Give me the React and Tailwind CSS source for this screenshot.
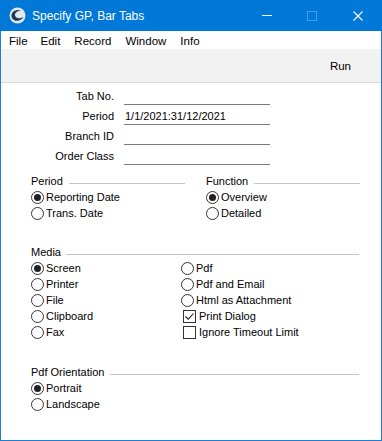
import React from "react";

const font = { fontFamily: '"Liberation Sans", Arial, sans-serif' };

function Radio({ checked, label }) {
  return (
    <div className="flex h-4 items-center">
      <span className="flex h-[13px] w-[13px] items-center justify-center rounded-full border border-[#333] bg-white">
        {checked && <span className="h-[7px] w-[7px] rounded-full bg-[#222]" />}
      </span>
      <span className="ml-[2px] leading-4">{label}</span>
    </div>
  );
}

function Check({ checked, label }) {
  return (
    <div className="flex h-4 items-center pl-[2px]">
      <span className="flex h-[13px] w-[13px] items-center justify-center border border-[#333] bg-white">
        {checked && (
          <svg width="11" height="11" viewBox="0 0 11 11">
            <path d="M1.5 5.5 L4.2 8.2 L9.5 2.5" fill="none" stroke="#222" strokeWidth="1.1" />
          </svg>
        )}
      </span>
      <span className="ml-[3px] leading-4">{label}</span>
    </div>
  );
}

function Header({ label, gap = "ml-[6px]" }) {
  return (
    <div className="flex h-4 items-center">
      <span className="leading-4">{label}</span>
      <span className={`${gap} mt-[5px] h-px flex-1 bg-[#c4c4c4]`} />
    </div>
  );
}

function Field({ label, value }) {
  return (
    <div className="flex h-5 items-end">
      <div className="w-[113px] pb-[1px] text-right leading-4">{label}</div>
      <div className="ml-[10px] h-5 w-[146px] border-b border-[#7a7a7a] pl-[1px] pt-[3px] leading-4">{value}</div>
    </div>
  );
}

export default function App() {
  return (
    <div className="flex h-[441px] w-[382px] flex-col border border-t-0 border-[#1a7fd8] bg-white text-[11px] text-black" style={font}>
      {/* title bar */}
      <div className="-mx-px flex h-[31px] items-center bg-[#0078d7] text-white">
        <svg className="ml-[9px]" width="17" height="17" viewBox="0 0 17 17">
          <circle cx="8.5" cy="8.5" r="8" fill="#dfe6ee" />
          <path d="M2.5 9 C2.5 4 8 2 12 3.5 C9 3.5 5.5 5.5 6 8.5 C6.5 11 10 12.5 14.5 10 C12.5 14 6 15 3.8 12 C3 11 2.5 10 2.5 9 Z" fill="#1d3550" />
        </svg>
        <span className="ml-[6px] text-[12px]">Specify GP, Bar Tabs</span>
        <div className="ml-auto flex items-center">
          <span className="mr-[35px] h-px w-[10px] bg-white" />
          <span className="mr-[36px] h-[10px] w-[10px] border border-[#4d9ee6]" />
          <svg className="mr-[19px]" width="10" height="10" viewBox="0 0 10 10">
            <path d="M0.5 0.5 L9.5 9.5 M9.5 0.5 L0.5 9.5" stroke="white" strokeWidth="1.1" />
          </svg>
        </div>
      </div>
      {/* menu bar */}
      <div className="flex h-[18px] items-center pt-[3px] text-[11.5px]">
        <span className="ml-[8px]">File</span>
        <span className="ml-[13px]">Edit</span>
        <span className="ml-[14px]">Record</span>
        <span className="ml-[14px]">Window</span>
        <span className="ml-[14px]">Info</span>
      </div>
      {/* toolbar */}
      <div className="flex h-[34px] items-center justify-end border-b border-[#dadada] bg-[#f2f2f2] pr-[30px] pt-[3px] text-[11.5px]">
        <span>Run</span>
      </div>
      {/* content */}
      <div className="flex flex-col pt-[2px]">
        <Field label="Tab No." value="" />
        <Field label="Period" value="1/1/2021:31/12/2021" />
        <Field label="Branch ID" value="" />
        <Field label="Order Class" value="" />

        <div className="mt-[8px] grid grid-cols-[154px_154px] gap-x-[21px] pl-[30px]">
          <div className="flex flex-col">
            <Header label="Period" />
            <Radio checked label="Reporting Date" />
            <Radio label="Trans. Date" />
          </div>
          <div className="flex flex-col">
            <Header label="Function" />
            <Radio checked label="Overview" />
            <Radio label="Detailed" />
          </div>
        </div>

        <div className="mt-[23px] flex flex-col pl-[30px] pr-[22px]">
          <Header label="Media" gap="ml-[5px]" />
          <div className="grid grid-cols-[150px_1fr]">
            <div className="flex flex-col">
              <Radio checked label="Screen" />
              <Radio label="Printer" />
              <Radio label="File" />
              <Radio label="Clipboard" />
              <Radio label="Fax" />
            </div>
            <div className="flex flex-col">
              <Radio label="Pdf" />
              <Radio label="Pdf and Email" />
              <Radio label="Html as Attachment" />
              <Check checked label="Print Dialog" />
              <Check label="Ignore Timeout Limit" />
            </div>
          </div>
        </div>

        <div className="mt-[24px] flex flex-col pl-[30px] pr-[22px]">
          <Header label="Pdf Orientation" />
          <Radio checked label="Portrait" />
          <Radio label="Landscape" />
        </div>
      </div>
    </div>
  );
}
